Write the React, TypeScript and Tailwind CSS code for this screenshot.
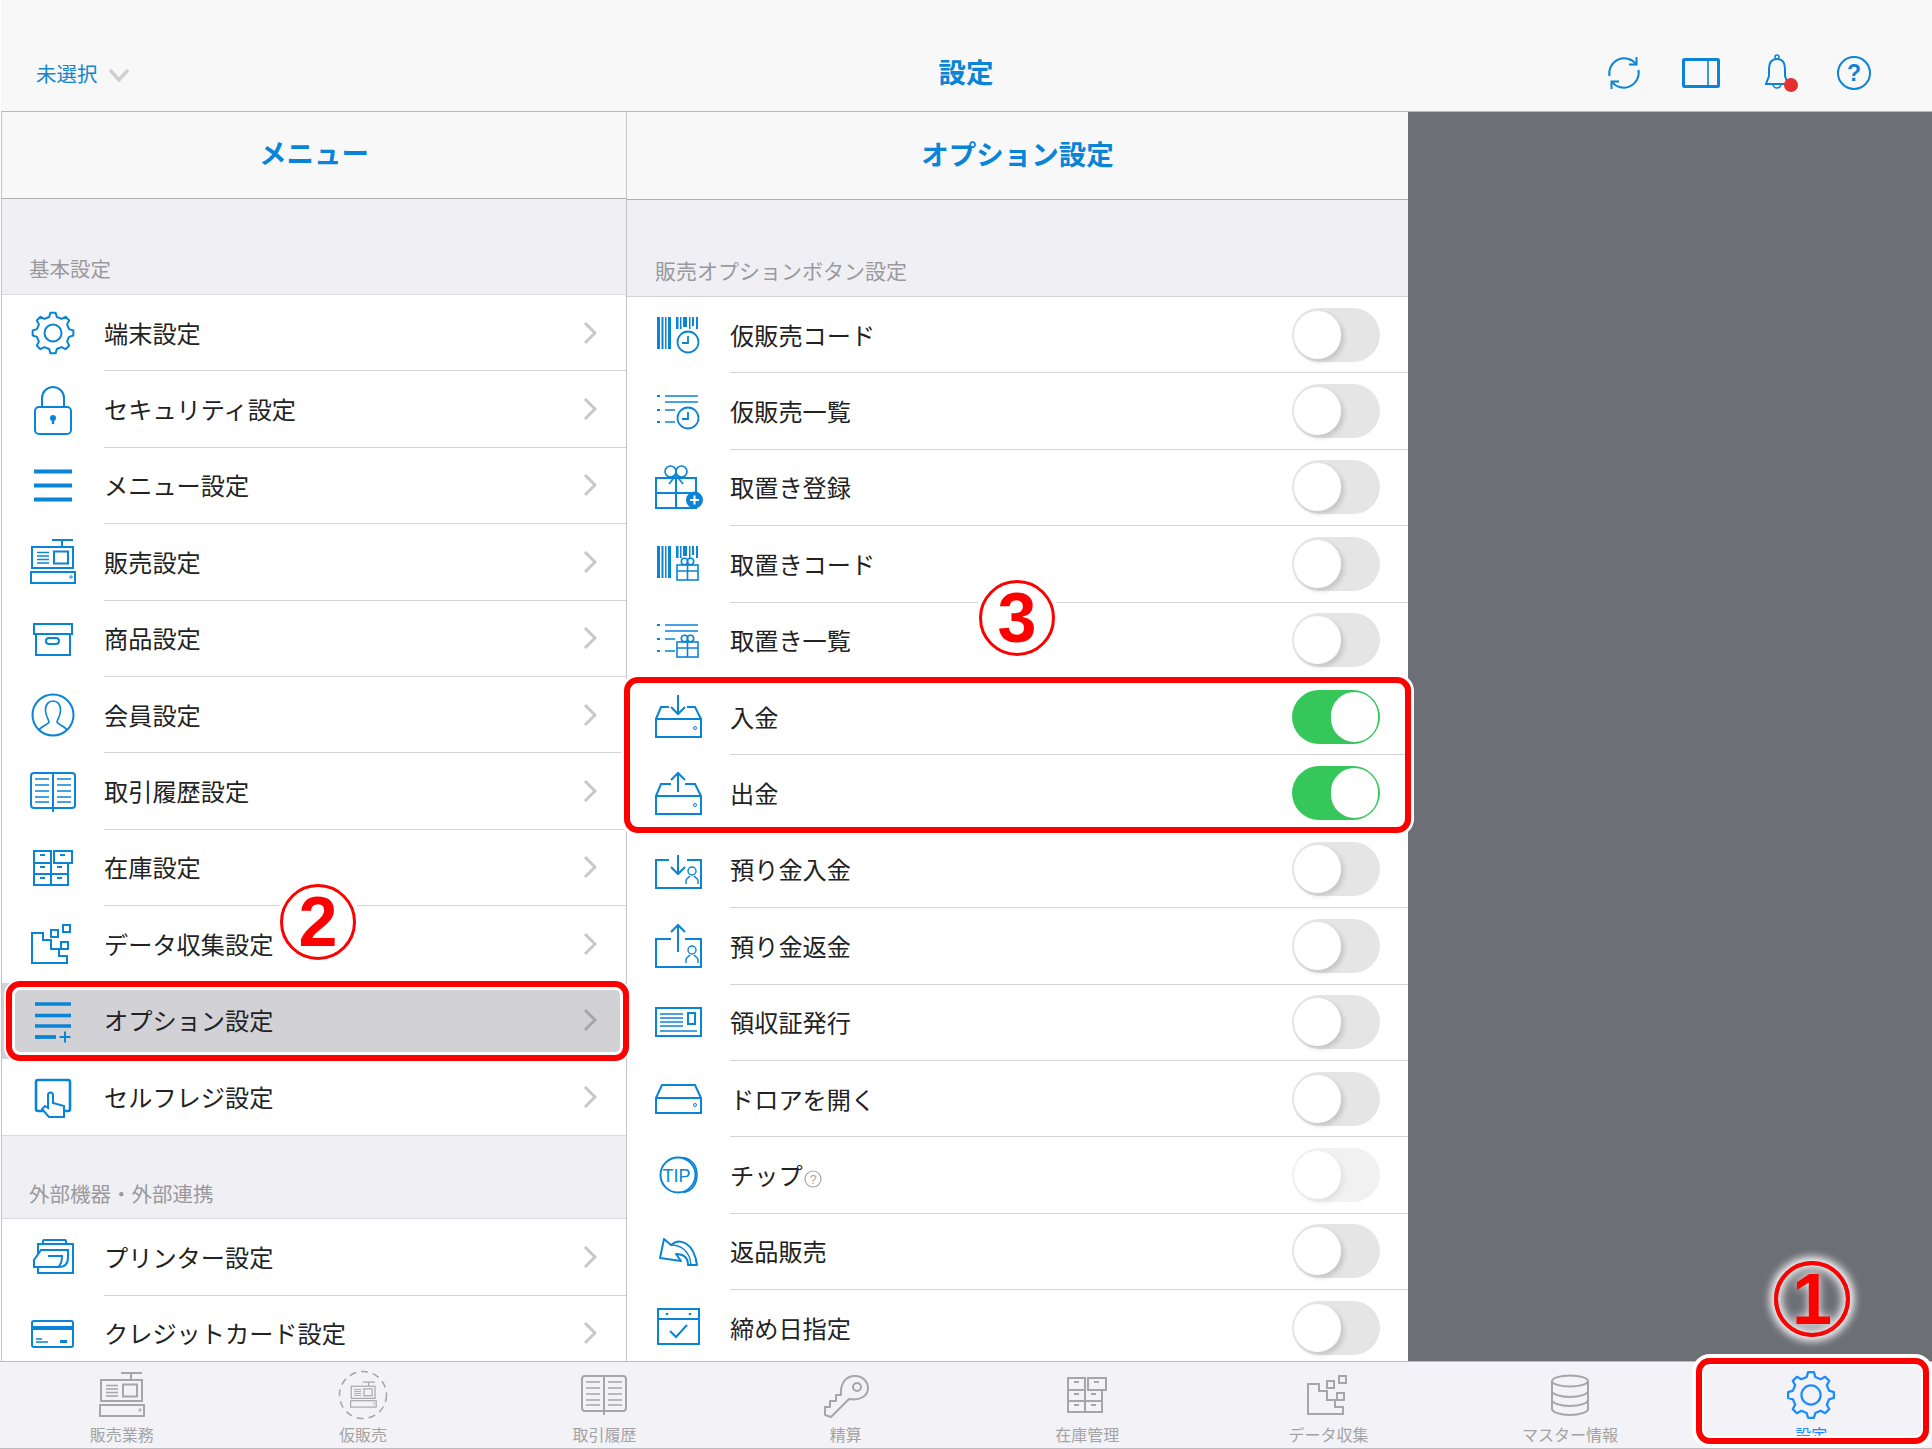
import type { ReactNode } from "react";

// 48x48 line icons, colour comes from currentColor
function Svg({ children, className = "w-12 h-12" }: { children: ReactNode; className?: string }) {
  return (
    <svg viewBox="0 0 48 48" fill="none" stroke="currentColor" strokeWidth="2" className={`shrink-0 overflow-visible ${className}`}>
      {children}
    </svg>
  );
}

function gearPath() {
  const teeth = 8;
  const pts: string[] = [];
  for (let i = 0; i < teeth; i++) {
    const a = (i / teeth) * Math.PI * 2 - Math.PI / 2;
    const step = (Math.PI * 2) / teeth;
    const list: [number, number][] = [
      [16.5, a - step * 0.3],
      [20.5, a - step * 0.16],
      [20.5, a + step * 0.16],
      [16.5, a + step * 0.3],
    ];
    list.forEach(([r, t]) => pts.push(`${(24 + r * Math.cos(t)).toFixed(2)} ${(24 + r * Math.sin(t)).toFixed(2)}`));
  }
  return "M" + pts.join(" L") + " Z";
}

const Gear = ({ className }: { className?: string }) => (
  <Svg className={className}>
    <path d={gearPath()} strokeLinejoin="round" />
    <circle cx="24" cy="24" r="8.5" />
  </Svg>
);
const Lock = () => (
  <Svg>
    <rect x="6" y="21" width="36" height="27" rx="4" />
    <path d="M13 21 V12 a11 11 0 0 1 22 0 V21" />
    <circle cx="24" cy="32" r="2" fill="currentColor" />
    <path d="M24 32 V38" strokeWidth="2.4" />
  </Svg>
);
const Hamburger = () => (
  <Svg>
    <path d="M5 9.5 H43 M5 23.5 H43 M5 37.5 H43" strokeWidth="4" />
  </Svg>
);
const RegisterShape = () => (
  <>
    <path d="M23 2 H44 M33 2 V9" />
    <rect x="3" y="9" width="41" height="21" />
    <path d="M8 14.5 H20 M8 18 H20 M8 21.5 H20 M8 25 H20" strokeWidth="1.6" />
    <rect x="25" y="13.5" width="14" height="12" />
    <rect x="2" y="34" width="44" height="11" />
    <circle cx="42" cy="39" r="1.2" strokeWidth="1" />
  </>
);
const Register = () => (
  <Svg>
    <RegisterShape />
  </Svg>
);
const DashedRegister = () => (
  <Svg>
    <circle cx="24" cy="24" r="23.5" strokeDasharray="7 5" strokeWidth="1.5" />
    <g transform="translate(10.5 10) scale(0.58)">
      <RegisterShape />
    </g>
  </Svg>
);
const Box = () => (
  <Svg>
    <rect x="5" y="9" width="38" height="10" />
    <path d="M7 19 V40 H41 V19" />
    <rect x="17" y="23" width="13" height="6" rx="3" />
  </Svg>
);
const Person = () => (
  <Svg>
    <circle cx="24" cy="24" r="20.5" />
    <path d="M10 39 C12 35 19 34 20 31 C20 29 17 26 16.5 20 C16 13 20 10 24 10 C28 10 32 13 31.5 20 C31 26 28 29 28 31 C29 34 36 35 38 39" strokeWidth="1.6" />
  </Svg>
);
const Book = () => (
  <Svg>
    <rect x="2" y="5" width="44" height="35" rx="3" />
    <path d="M24 4 V44" />
    <path d="M6 11 H20 M6 17 H20 M6 23 H20 M6 29 H20 M6 34 H20 M28 11 H42 M28 17 H42 M28 23 H42 M28 29 H42 M28 34 H42" strokeWidth="1.6" />
  </Svg>
);
const Stock = () => (
  <Svg>
    <rect x="5" y="7" width="17" height="12" />
    <rect x="25" y="7" width="18" height="12" />
    <path d="M5 19 V41 H39 V19 M5 30 H39 M22 19 V41" />
    <path d="M11 11 H16 M31 11 H36 M11 23 H16 M28 23 H33 M11 34 H16 M28 34 H33" />
  </Svg>
);
const DataCollect = () => (
  <Svg>
    <path d="M3 13 H14 V20 H22 V29 H30 V36 H38 V43 H3 Z" />
    <rect x="22" y="10" width="7" height="7" />
    <rect x="34" y="5" width="7" height="7" />
    <rect x="32" y="22" width="7" height="7" />
  </Svg>
);
const OptionList = () => (
  <Svg>
    <path d="M6 7 H42 M6 18.5 H42 M6 29 H42" strokeWidth="3.4" />
    <path d="M6 40 H27" strokeWidth="3.8" />
    <path d="M36 34.5 V45.5 M30.5 40 H41.5" />
  </Svg>
);
const SelfReg = () => (
  <Svg>
    <path d="M14 38 H9 a2 2 0 0 1 -2 -2 V9 a2 2 0 0 1 2 -2 H39 a2 2 0 0 1 2 2 V36 a2 2 0 0 1 -2 2 H35" strokeWidth="2.6" />
    <path d="M20 44 L13 36 L16 33 L19 35 V22 a2.5 2.5 0 0 1 5 0 V30 L35 33 V44 Z" />
  </Svg>
);
const Printer = () => (
  <Svg>
    <path d="M14 11 V8 a1 1 0 0 1 1 -1 H36 a1 1 0 0 1 1 1 V11" />
    <rect x="9" y="11" width="35" height="29" />
    <path d="M12 17 H39 V24 C39 31 36 34 30 34 H5 V27 Z" fill="#fff" />
    <path d="M19 23 H33 C33 28 32 32 29 34" />
  </Svg>
);
const Card = () => (
  <Svg>
    <rect x="3" y="11" width="41" height="26" rx="2" />
    <path d="M3 18 H44" strokeWidth="4" />
    <path d="M7 29 H13 M7 32 H19" strokeWidth="1.5" />
    <rect x="31" y="30" width="7" height="3" fill="currentColor" stroke="none" />
  </Svg>
);
const Bars = () => (
  <g fill="currentColor" stroke="none">
    <rect x="2" y="6" width="3" height="32" />
    <rect x="6.5" y="6" width="2" height="32" />
    <rect x="10" y="6" width="1.5" height="32" />
    <rect x="13" y="6" width="3" height="32" />
    <rect x="21" y="6" width="2.5" height="12" />
    <rect x="25" y="6" width="1.5" height="12" />
    <rect x="28" y="6" width="4" height="10" />
    <rect x="34" y="6" width="1.5" height="12" />
    <rect x="37" y="6" width="2" height="9" />
    <rect x="41" y="6" width="2" height="12" />
  </g>
);
const Clock = ({ cy }: { cy: number }) => (
  <>
    <circle cx="33" cy={cy} r="10.5" fill="#fff" strokeWidth="1.8" />
    <path d={`M33 ${cy - 6} V${cy + 1} H27`} strokeWidth="1.8" />
  </>
);
const SmallGift = ({ y }: { y: number }) => (
  <g strokeWidth="1.6">
    <rect x="22" y={y + 5} width="21" height="15" fill="#fff" />
    <path d={`M32.5 ${y + 5} V${y + 20} M22 ${y + 11} H43`} />
    <circle cx="29.5" cy={y + 1.5} r="3.2" />
    <circle cx="35.5" cy={y + 1.5} r="3.2" />
  </g>
);
const ListLines = () => (
  <>
    <path d="M10 8 H43 M10 14 H43 M10 22 H20 M10 34 H20" strokeWidth="1.6" />
    <path d="M2 8 H5 M2 22 H5 M2 34 H5" strokeWidth="2" />
  </>
);
const BarcodeClock = () => (
  <Svg>
    <Bars />
    <Clock cy={31} />
  </Svg>
);
const ListClock = () => (
  <Svg>
    <ListLines />
    <Clock cy={30} />
  </Svg>
);
const GiftPlus = () => (
  <Svg>
    <rect x="1" y="14" width="40" height="30" />
    <path d="M21 14 V44 M1 29 H41" />
    <circle cx="15.5" cy="7.5" r="5.5" strokeWidth="1.6" />
    <circle cx="26.5" cy="7.5" r="5.5" strokeWidth="1.6" />
    <path d="M21 11 L14 20 M21 11 L28 20" strokeWidth="1.6" />
    <circle cx="39.5" cy="36" r="8.5" fill="currentColor" stroke="none" />
    <path d="M39.5 31.5 V40.5 M35 36 H44" stroke="#fff" />
  </Svg>
);
const BarcodeGift = () => (
  <Svg>
    <Bars />
    <SmallGift y={20} />
  </Svg>
);
const ListGift = () => (
  <Svg>
    <ListLines />
    <SmallGift y={20} />
  </Svg>
);
const TrayIn = () => (
  <Svg>
    <path d="M1 26 L6 14 H14 M32 14 H40 L46 26 M1 26 H46 V44 H1 Z" />
    <path d="M23 2 V21 M16 14 L23 21 L30 14" />
    <circle cx="40" cy="35" r="1.5" strokeWidth="1" />
  </Svg>
);
const TrayOut = () => (
  <Svg>
    <path d="M1 26 L6 14 H16 M30 14 H40 L46 26 M1 26 H46 V44 H1 Z" />
    <path d="M23 22 V3 M16 10 L23 3 L30 10" />
    <circle cx="40" cy="35" r="1.5" strokeWidth="1" />
  </Svg>
);
const PersonMini = () => (
  <g strokeWidth="1.4">
    <circle cx="37" cy="25" r="4" />
    <path d="M31 38 V35 C31 32 34 31.5 35 30 M43 38 V35 C43 32 40 31.5 39 30" />
  </g>
);
const DepositIn = () => (
  <Svg>
    <path d="M14 14 H1 V42 H46 V14 H32" />
    <path d="M23 9 V28 M16 21 L23 28 L30 21" />
    <PersonMini />
  </Svg>
);
const DepositOut = () => (
  <Svg>
    <path d="M16 17 H1 V45 H46 V17 H30" />
    <path d="M23 30 V3 M16 10 L23 3 L30 10" />
    <g transform="translate(0 3)">
      <PersonMini />
    </g>
  </Svg>
);
const Receipt = () => (
  <Svg>
    <rect x="1" y="9" width="45" height="28" />
    <path d="M5 15 H28 M5 19 H28 M5 23 H28 M5 27 H28 M5 32 H42" strokeWidth="1.6" />
    <rect x="33" y="14" width="7" height="11" />
  </Svg>
);
const Drawer = () => (
  <Svg>
    <path d="M1 23 L7 10 H40 L46 23 V38 H1 Z M1 23 H46" />
    <circle cx="40" cy="30" r="1.5" strokeWidth="1" />
  </Svg>
);
const Tip = () => (
  <Svg>
    <circle cx="23" cy="24" r="17.5" />
    <path d="M28 6.5 C38 8 42 16 42 24 C42 32 38 40 28 41.5" strokeWidth="1.6" />
    <text x="21.5" y="30.5" textAnchor="middle" fontSize="18" fill="currentColor" stroke="none" fontFamily="'Liberation Sans', sans-serif">TIP</text>
  </Svg>
);
const ReturnArrow = () => (
  <Svg>
    <path d="M5 30 L9 11 L16 17 C25 9 39 15 42 37 H33 C33 29 28 26 21 26 L26 33 Z" strokeLinejoin="round" />
    <path d="M16 17 C26 17 35 23 36 37" strokeWidth="1.4" />
  </Svg>
);
const Calendar = () => (
  <Svg>
    <rect x="3" y="5" width="41" height="35" />
    <path d="M3 15 H44" />
    <path d="M12 9 V11 M35 9 V11" strokeWidth="2.4" />
    <path d="M15 27 L21 33 L32 21" />
  </Svg>
);
const Key = () => (
  <Svg>
    <path d="M3 44 L3 36 L8 36 L8 30 L14 30 L14 24 L19 24 C18 12 24 5 33 5 C41 5 46 11 46 17 C46 25 38 30 27 28 L9 46 Z" strokeLinejoin="round" />
    <circle cx="35" cy="16" r="4" />
  </Svg>
);
const Database = () => (
  <Svg>
    <ellipse cx="24" cy="10" rx="18" ry="5.5" />
    <path d="M6 10 V38 C6 41 14 44 24 44 C34 44 42 41 42 38 V10" />
    <path d="M6 20 C6 23 14 26 24 26 C34 26 42 23 42 20 M6 29 C6 32 14 35 24 35 C34 35 42 32 42 29" />
  </Svg>
);

const menuBasic = [
  { label: "端末設定", icon: Gear },
  { label: "セキュリティ設定", icon: Lock },
  { label: "メニュー設定", icon: Hamburger },
  { label: "販売設定", icon: Register },
  { label: "商品設定", icon: Box },
  { label: "会員設定", icon: Person },
  { label: "取引履歴設定", icon: Book },
  { label: "在庫設定", icon: Stock },
  { label: "データ収集設定", icon: DataCollect },
  { label: "オプション設定", icon: OptionList, selected: true },
  { label: "セルフレジ設定", icon: SelfReg },
];

const menuExternal = [
  { label: "プリンター設定", icon: Printer },
  { label: "クレジットカード設定", icon: Card },
];

const options = [
  { label: "仮販売コード", icon: BarcodeClock },
  { label: "仮販売一覧", icon: ListClock },
  { label: "取置き登録", icon: GiftPlus },
  { label: "取置きコード", icon: BarcodeGift },
  { label: "取置き一覧", icon: ListGift },
  { label: "入金", icon: TrayIn, on: true },
  { label: "出金", icon: TrayOut, on: true },
  { label: "預り金入金", icon: DepositIn },
  { label: "預り金返金", icon: DepositOut },
  { label: "領収証発行", icon: Receipt },
  { label: "ドロアを開く", icon: Drawer },
  { label: "チップ", icon: Tip, disabled: true, help: true },
  { label: "返品販売", icon: ReturnArrow },
  { label: "締め日指定", icon: Calendar },
];

const tabs = [
  { label: "販売業務", icon: Register },
  { label: "仮販売", icon: DashedRegister },
  { label: "取引履歴", icon: Book },
  { label: "精算", icon: Key },
  { label: "在庫管理", icon: Stock },
  { label: "データ収集", icon: DataCollect },
  { label: "マスター情報", icon: Database },
];

function MenuRow({ label, icon: Icon, selected, last }: { label: string; icon: () => ReactNode; selected?: boolean; last?: boolean }) {
  return (
    <div className={`flex items-center h-[76.4px] shrink-0 pl-[27px] ${selected ? "bg-[#d1d1d6]" : "bg-white"}`}>
      <div className="text-[#0a84d6]">
        <Icon />
      </div>
      <div className={`flex flex-1 h-full items-center justify-between ml-[27px] pr-[29px] ${last ? "" : "border-b border-[#d4d4d6]"}`}>
        <span className="text-[24.2px] leading-none text-[#222]">{label}</span>
        <svg viewBox="0 0 14 24" fill="none" stroke={selected ? "#a5a5aa" : "#c7c7cc"} strokeWidth="3" className="w-[14px] h-6">
          <path d="M2 2 L12 12 L2 22" />
        </svg>
      </div>
    </div>
  );
}

function Toggle({ on, disabled }: { on?: boolean; disabled?: boolean }) {
  if (on) {
    return (
      <div className="flex items-center justify-end w-[88px] h-[54px] rounded-full bg-[#35c759] px-[2px]">
        <div className="w-[47px] h-[50px] rounded-full bg-white" />
      </div>
    );
  }
  return (
    <div className={`flex items-center w-[88px] h-[54px] rounded-full bg-[#e5e5e5] px-[2px] ${disabled ? "opacity-50" : ""}`}>
      <div className="w-[47px] h-[48px] rounded-full bg-white shadow-[3px_3px_5px_rgba(0,0,0,0.14)]" />
    </div>
  );
}

function OptionRow({ label, icon: Icon, on, disabled, help }: { label: string; icon: () => ReactNode; on?: boolean; disabled?: boolean; help?: boolean }) {
  return (
    <div className="flex items-center h-[76.4px] pl-[28px] bg-white shrink-0">
      <div className="text-[#0a84d6]">
        <Icon />
      </div>
      <div className="flex flex-1 h-full items-center justify-between ml-[27px] pr-[28px] border-b border-[#d4d4d6]">
        <span className="flex items-center text-[24.2px] leading-none text-[#222]">
          {label}
          {help && (
            <svg viewBox="0 0 18 18" className="w-[18px] h-[18px] mt-[8px] ml-[1px]" fill="none" stroke="#a5a5a5" strokeWidth="1.2">
              <circle cx="9" cy="9" r="8" />
              <text x="9" y="13.5" textAnchor="middle" fontSize="13" fill="#a5a5a5" stroke="none" fontFamily="'Liberation Sans', sans-serif">?</text>
            </svg>
          )}
        </span>
        <Toggle on={on} disabled={disabled} />
      </div>
    </div>
  );
}

export default function App() {
  return (
    <div className="relative flex flex-col w-[1932px] h-[1449px] overflow-hidden bg-white pl-px font-['Noto_Sans_CJK_JP','Noto_Sans',sans-serif]">
      {/* top bar */}
      <header className="grid grid-cols-[895px_70px_1fr] items-end h-[112px] shrink-0 bg-[#f8f8f8] border-b border-[#b8b8b8] pb-[14px] pl-[35px] pr-[54px]">
        <div className="flex items-center h-12 gap-[10px]">
          <span className="text-[20.5px] text-[#1585cc]">未選択</span>
          <svg viewBox="0 0 22 14" fill="none" stroke="#cfcfcf" strokeWidth="3.4" className="w-[22px] h-[14px] mt-[3px]">
            <path d="M2 2 L11 12 L20 2" />
          </svg>
        </div>
        <div className="flex items-center justify-center h-12 pb-[2px] text-[27.5px] font-bold text-[#0a84d6]">設定</div>
        <div className="flex items-center justify-end gap-[28.7px] text-[#0a84d6]">
          <Svg>
            <path d="M9.5 27 A15 15 0 0 1 36 15" />
            <path d="M36.5 8 V15.5 H29" />
            <path d="M38.5 21 A15 15 0 0 1 12 33" />
            <path d="M11.5 40 V32.5 H19" />
          </Svg>
          <Svg>
            <rect x="6.5" y="10.5" width="35" height="27" rx="1" strokeWidth="3" />
            <path d="M31 10 V38" strokeWidth="1.6" />
          </Svg>
          <Svg>
            <circle cx="24" cy="8" r="2" strokeWidth="1.6" />
            <path d="M24 10 C17 10 16 15 16 20 V27 L13 35 H35 L32 27 V20 C32 15 31 10 24 10 Z" />
            <path d="M20 35 a4 4 0 0 0 8 0" strokeWidth="1.6" />
            <circle cx="38" cy="36" r="7" fill="#e53030" stroke="none" />
          </Svg>
          <Svg>
            <circle cx="24" cy="24" r="16" />
            <text x="24" y="32" textAnchor="middle" fontSize="23" fontWeight="700" fill="currentColor" stroke="none" fontFamily="'Liberation Sans', sans-serif">?</text>
          </Svg>
        </div>
      </header>

      <div className="flex flex-1 min-h-0">
        {/* menu column */}
        <section className="flex flex-col w-[626px] shrink-0 overflow-hidden border-l border-r border-[#c4c4c6] bg-white">
          <div className="flex items-center justify-center h-[87px] shrink-0 bg-[#f8f8f8] border-b border-[#b0b0b2] pb-[4px] text-[27.5px] font-bold text-[#0a84d6]">メニュー</div>
          <div className="flex items-end h-[96px] shrink-0 bg-[#efeff4] border-b border-[#dcdcdf] pl-[27px] pb-[11px] text-[20.5px] leading-[30px] text-[#9a9a9e]">基本設定</div>
          {menuBasic.map((row, i) => (
            <MenuRow key={row.label} {...row} last={i === menuBasic.length - 1} />
          ))}
          <div className="flex items-end h-[84px] shrink-0 bg-[#efeff4] border-y border-[#dcdcdf] pl-[27px] pb-[10px] text-[20.5px] leading-[30px] text-[#9a9a9e]">外部機器・外部連携</div>
          {menuExternal.map((row) => (
            <MenuRow key={row.label} {...row} />
          ))}
        </section>

        {/* option column */}
        <section className="flex flex-col w-[781px] shrink-0 overflow-hidden bg-white">
          <div className="flex items-center justify-center h-[88px] shrink-0 bg-[#f8f8f8] border-b border-[#b0b0b2] pb-[4px] text-[27.5px] font-bold text-[#0a84d6]">オプション設定</div>
          <div className="flex items-end h-[97px] shrink-0 bg-[#efeff4] border-b border-[#d4d4d6] pl-[28px] pb-[11px] text-[21px] leading-[30px] text-[#9a9a9e]">販売オプションボタン設定</div>
          {options.map((row) => (
            <OptionRow key={row.label} {...row} />
          ))}
        </section>

        <div className="flex-1 bg-[#6d6f76]" />
      </div>

      {/* tab bar */}
      <nav className="grid grid-cols-8 h-[88px] shrink-0 bg-[#f2f2f7] border-y border-[#bcbcbe] -ml-px pl-px">
        {tabs.map(({ label, icon: Icon }) => (
          <div key={label} className="flex flex-col items-center pt-[9px] text-[#a6a6a6]">
            <Icon />
            <span className="mt-[5px] text-[16px] leading-[20px] text-[#a4a4a4]">{label}</span>
          </div>
        ))}
        <div className="flex flex-col items-center pt-[6px] text-[#1a8cff]">
          <Gear className="w-[54px] h-[54px]" />
          <span className="mt-[2px] text-[16px] leading-[20px]">設定</span>
        </div>
      </nav>

      {/* red annotations over the screenshot */}
      <div className="absolute left-[6px] top-[981px] w-[623px] h-[80px] rounded-[14px] border-[6px] border-[#fe0000] shadow-[0_0_0_2px_rgba(255,255,255,0.9),inset_0_0_0_3px_white]" />
      <div className="absolute left-[624px] top-[677px] w-[787px] h-[156px] rounded-[14px] border-[6px] border-[#fe0000] shadow-[0_0_0_3px_white]" />
      <div className="absolute left-[1696px] top-[1358px] w-[233px] h-[86px] rounded-[14px] border-[6px] border-[#fe0000] shadow-[0_0_0_4px_white,inset_0_0_0_2px_white]" />

      <div className="absolute left-[1774px] top-[1261px] flex items-center justify-center w-[76px] h-[76px] rounded-full border-[4px] border-[#fe0000] font-['Liberation_Sans',sans-serif] font-bold text-[72px] leading-none text-[#fe0000] [text-shadow:0_0_10px_white] shadow-[0_0_9px_4px_white,inset_0_0_10px_3px_white]">1</div>
      <div className="absolute left-[280px] top-[884px] flex items-center justify-center w-[76px] h-[76px] rounded-full bg-white border-[3px] border-[#fe0000] font-['Liberation_Sans',sans-serif] font-bold text-[70px] leading-none text-[#fe0000] shadow-[0_0_0_4px_white]">2</div>
      <div className="absolute left-[979px] top-[580px] flex items-center justify-center w-[76px] h-[76px] rounded-full bg-white border-[3px] border-[#fe0000] font-['Liberation_Sans',sans-serif] font-bold text-[70px] leading-none text-[#fe0000] shadow-[0_0_0_4px_white]">3</div>
    </div>
  );
}
